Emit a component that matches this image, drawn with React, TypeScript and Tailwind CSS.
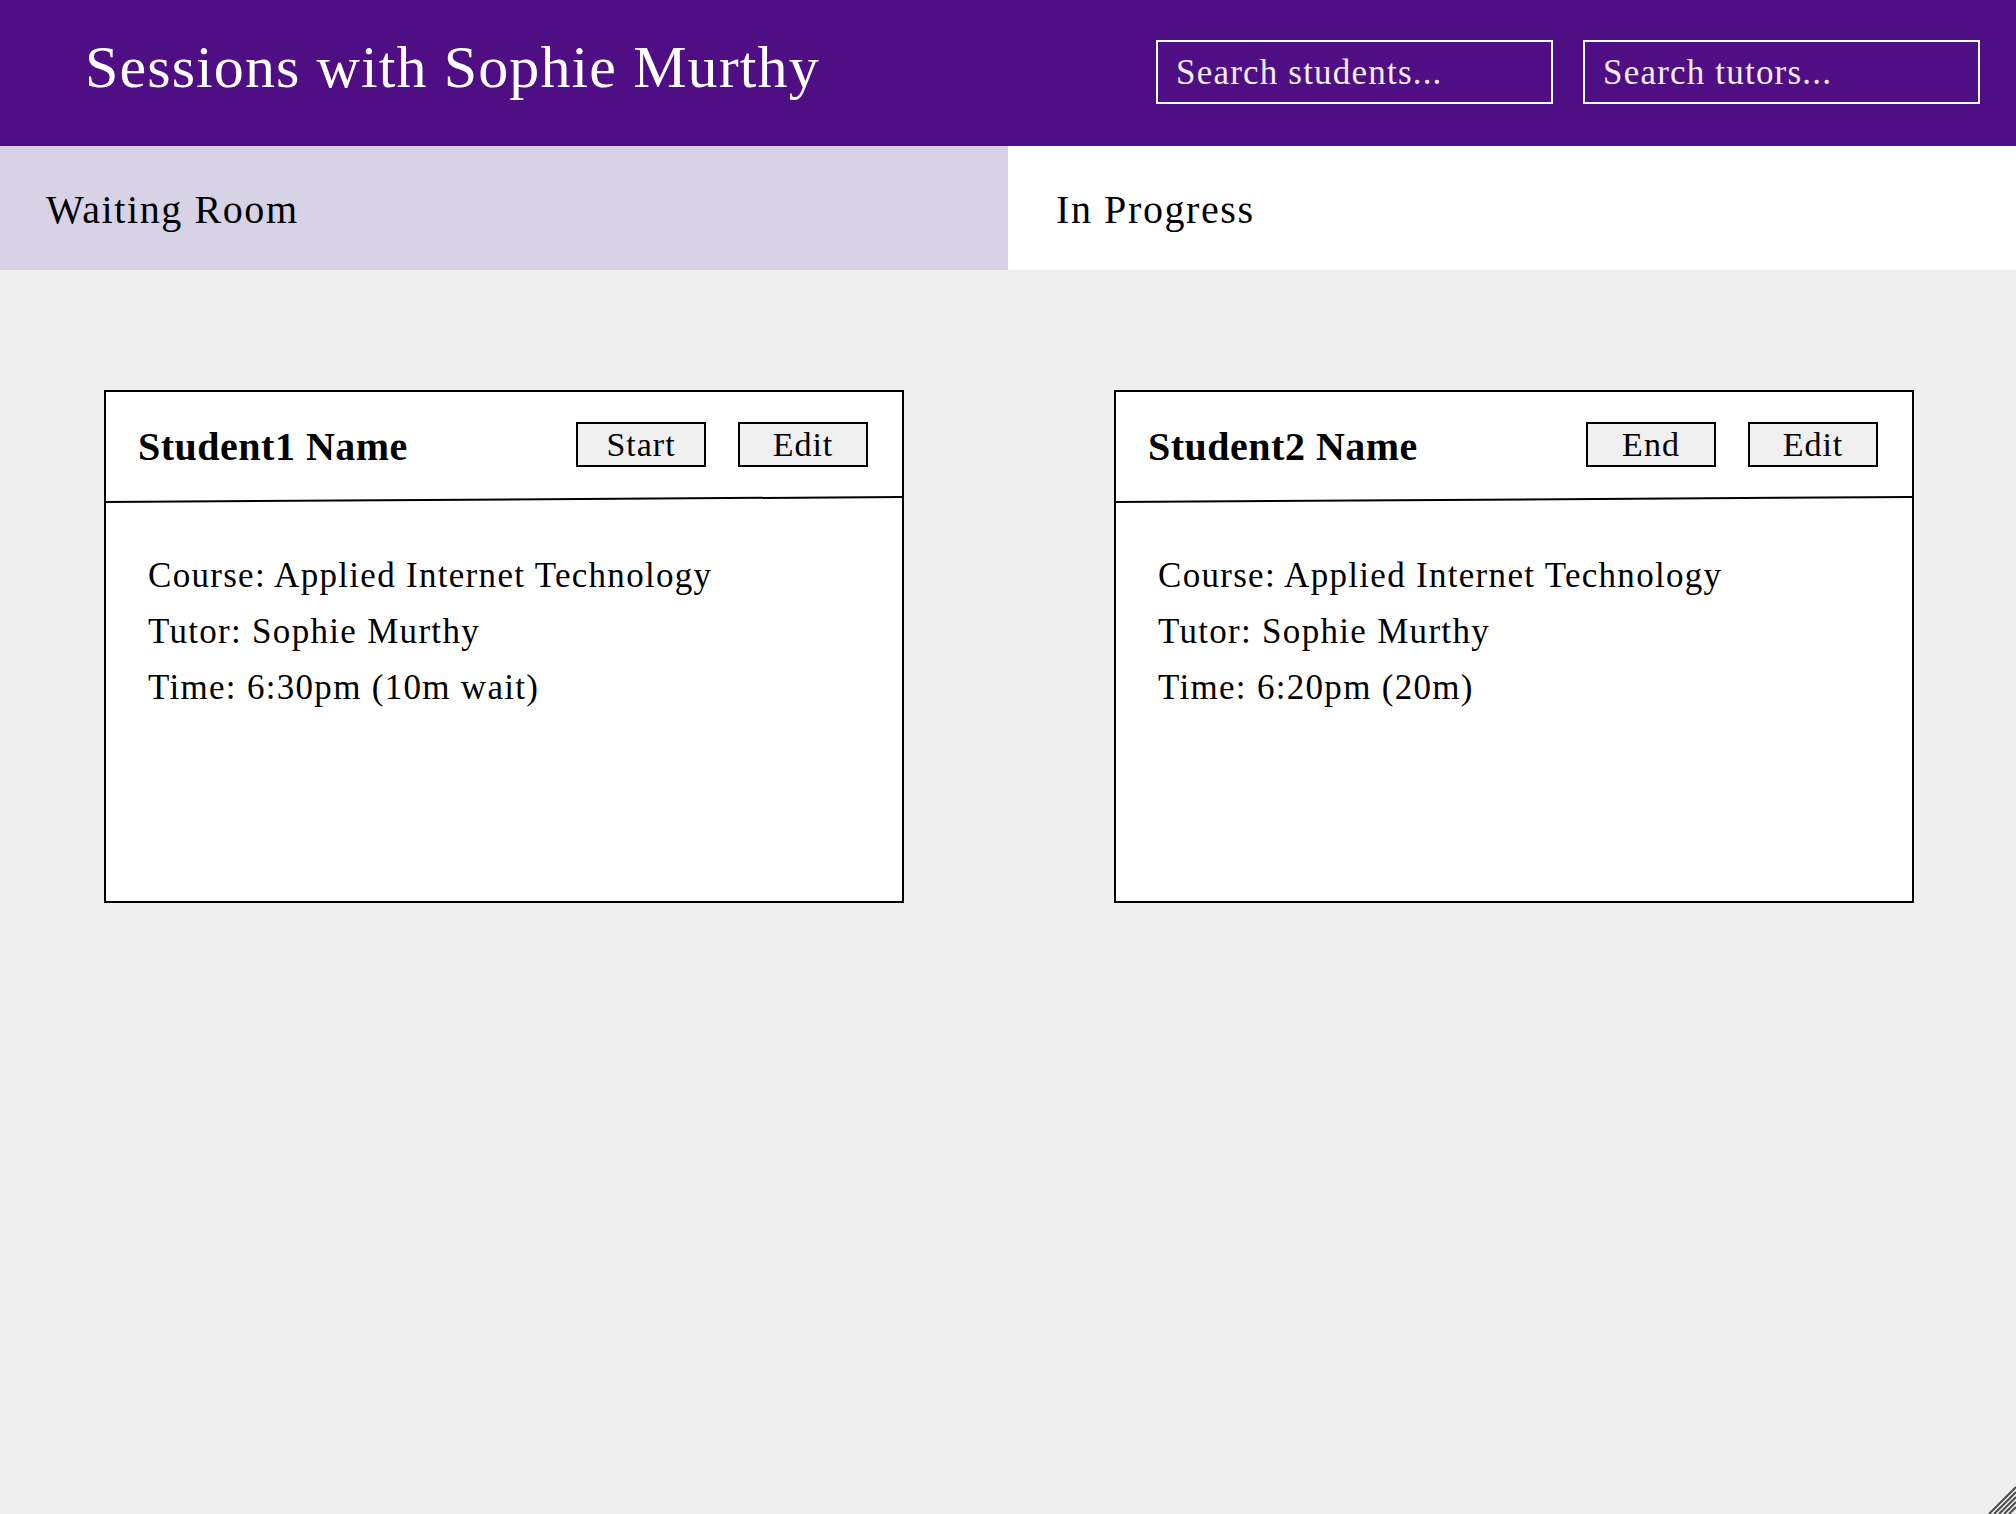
import React from "react";

const serif = { fontFamily: '"Liberation Serif", "Times New Roman", serif' };

function Card({ name, action, time }: { name: string; action: string; time: string }) {
  return (
    <div className="w-[800px] h-[513px] border-2 border-black bg-white flex flex-col">
      <div className="h-[104px] flex items-start justify-between pl-[32px] pr-[34px] pt-[30px]">
        <div className="mt-[5px] text-[40px] leading-none font-bold text-black tracking-[0.5px]">{name}</div>
        <div className="flex gap-[32px]">
          <button className="w-[130px] h-[45px] border-2 border-black bg-[#f0f0f0] text-[34px] leading-none text-black tracking-[1px]" style={serif}>
            {action}
          </button>
          <button className="w-[130px] h-[45px] border-2 border-black bg-[#f0f0f0] text-[34px] leading-none text-black tracking-[1px]" style={serif}>
            Edit
          </button>
        </div>
      </div>
      <svg className="block w-full h-[8px]" viewBox="0 0 796 8" preserveAspectRatio="none">
        <line x1="0" y1="6" x2="796" y2="1" stroke="#000" strokeWidth="2" />
      </svg>
      <div className="pl-[42px] pt-[44px] text-[35px] leading-[56px] text-black tracking-[1.3px]">
        <div>Course: Applied Internet Technology</div>
        <div>Tutor: Sophie Murthy</div>
        <div>Time: {time}</div>
      </div>
    </div>
  );
}

export default function App() {
  return (
    <div className="relative min-h-screen w-full bg-[#efefef] flex flex-col" style={serif}>
      <header className="h-[146px] bg-[#500e85] flex items-start justify-between">
        <h1 className="mt-[37px] pl-[85px] text-[60px] leading-none text-white font-normal tracking-[1.1px]">
          Sessions with Sophie Murthy
        </h1>
        <div className="mt-[40px] pr-[36px] flex gap-[30px]">
          <input
            className="w-[397px] h-[64px] border-2 border-white bg-transparent px-[18px] pt-[2px] text-[35px] text-white placeholder:text-[#f3eef8] outline-none tracking-[1.2px]"
            style={serif}
            placeholder="Search students..."
          />
          <input
            className="w-[397px] h-[64px] border-2 border-white bg-transparent px-[18px] pt-[2px] text-[35px] text-white placeholder:text-[#f3eef8] outline-none tracking-[1.2px]"
            style={serif}
            placeholder="Search tutors..."
          />
        </div>
      </header>
      <div className="grid grid-cols-2 h-[124px]">
        <div className="bg-[#d7d2e6] flex items-center pl-[46px] pt-[3px] text-[40px] leading-none text-black tracking-[1.6px]">
          Waiting Room
        </div>
        <div className="bg-white flex items-center pl-[48px] pt-[3px] text-[40px] leading-none text-black tracking-[1.6px]">
          In Progress
        </div>
      </div>
      <main className="grid grid-cols-2 pt-[120px] flex-1">
        <div className="flex justify-center">
          <Card name="Student1 Name" action="Start" time="6:30pm (10m wait)" />
        </div>
        <div className="flex justify-center pl-[4px]">
          <Card name="Student2 Name" action="End" time="6:20pm (20m)" />
        </div>
      </main>
      <svg className="absolute bottom-0 right-0 w-[28px] h-[30px]" viewBox="0 0 28 30">
        <g stroke="#4a4a4a" strokeWidth="2">
          <line x1="1" y1="30" x2="28" y2="3" />
          <line x1="6" y1="30" x2="28" y2="8" />
          <line x1="11" y1="30" x2="28" y2="13" />
          <line x1="16" y1="30" x2="28" y2="18" />
          <line x1="21" y1="30" x2="28" y2="23" />
        </g>
      </svg>
    </div>
  );
}
